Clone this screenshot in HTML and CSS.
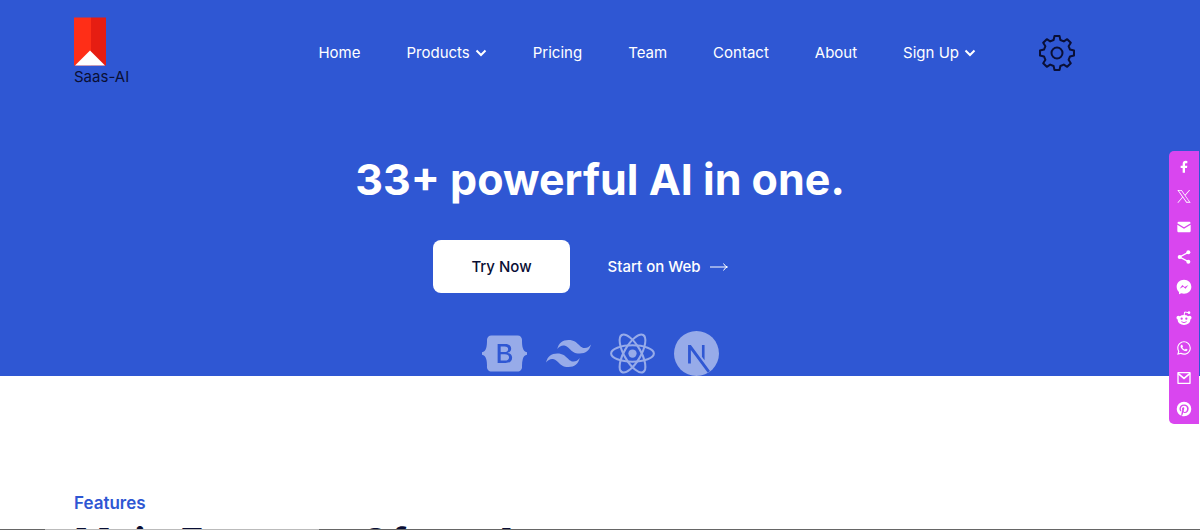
FILE: index.html
```
<!DOCTYPE html>
<html lang="en">
<head>
    <meta charset="UTF-8">
    <meta name="viewport" content="width=device-width, initial-scale=1.0">
    <title>Saas-AI</title>
    <link rel="stylesheet" href="styles.css">
</head>
<body>
    <div class="hero">
        <header class="header">
            <a class="logo" href="#">
                <svg width="32" height="48" viewBox="0 0 32 48">
                    <path fill="#ff2e17" d="M0 0h17v48H0z"/>
                    <path fill="#e61d12" d="M17 0h15v48H17z"/>
                    <path fill="#fff" d="M16 33l15 15H1z"/>
                </svg>
                <span>Saas-AI</span>
            </a>
            <nav class="nav">
                <a href="#">Home</a>
                <a href="#">Products
                    <svg class="chevron" viewBox="0 0 12 8"><path d="M1.500 1.500L6 6l4.500-4.500"/></svg>
                </a>
                <a href="#">Pricing</a>
                <a href="#">Team</a>
                <a href="#">Contact</a>
                <a href="#">About</a>
                <a href="#">Sign Up
                    <svg class="chevron" viewBox="0 0 12 8"><path d="M1.500 1.500L6 6l4.500-4.500"/></svg>
                </a>
            </nav>
            <button class="settings" aria-label="Settings">
                <svg viewBox="-18 -18 36 36">
                    <path d="M-2.500-17H2.500L3.400-13L6.800-11.600L10.200-13.800L13.800-10.200L11.600-6.800L13-3.400L17-2.500V2.500L13 3.400L11.600 6.800L13.800 10.200L10.200 13.800L6.800 11.600L3.400 13L2.500 17H-2.500L-3.400 13L-6.800 11.600L-10.200 13.800L-13.800 10.200L-11.600 6.800L-13 3.400L-17 2.500V-2.500L-13-3.400L-11.600-6.800L-13.800-10.200L-10.200-13.800L-6.800-11.600L-3.400-13Z"/>
                    <circle r="5.500"/>
                </svg>
            </button>
        </header>

        <section class="intro">
            <h1>33+ powerful AI in one.</h1>
            <div class="actions">
                <button class="try">Try Now</button>
                <a class="start" href="#">Start on Web
                    <svg width="20" height="8" viewBox="0 0 20 8"><path d="M1 4h17M14.500.500Q16 3.500 18.500 4Q16 4.500 14.500 7.500"/></svg>
                </a>
            </div>
            <div class="stack">
                <svg viewBox="0 0 24 24"><path d="M11.77 11.24H9.956V8.202h2.152c1.17 0 1.834.522 1.834 1.466 0 1.008-.773 1.572-2.174 1.572zm.324 1.206H9.957v3.348h2.231c1.459 0 2.232-.585 2.232-1.685s-.795-1.663-2.326-1.663zM24 11.39v1.218c-1.128.108-1.817.944-2.226 2.268-.407 1.319-.463 2.937-.42 4.186.045 1.3-.968 2.5-2.337 2.5H4.985c-1.37 0-2.383-1.2-2.337-2.5.043-1.249-.013-2.867-.42-4.186-.41-1.324-1.1-2.16-2.228-2.268V11.39c1.128-.108 1.819-.944 2.227-2.268.408-1.319.464-2.937.42-4.186-.045-1.3.968-2.5 2.338-2.5h14.032c1.37 0 2.382 1.2 2.337 2.5-.043 1.249.013 2.867.42 4.186.409 1.324 1.098 2.16 2.226 2.268zm-7.927 2.817c0-1.354-.953-2.333-2.368-2.488v-.057c1.04-.169 1.856-1.135 1.856-2.213 0-1.537-1.213-2.538-3.062-2.538h-4.16v10.172h4.181c2.218 0 3.553-1.086 3.553-2.876z"/></svg>
                <svg viewBox="0 0 24 24"><path d="M12 4.800c-3.200 0-5.200 1.600-6 4.800 1.200-1.600 2.600-2.200 4.200-1.800.913.228 1.565.890 2.288 1.624C13.666 10.618 15.027 12 18 12c3.200 0 5.200-1.600 6-4.800-1.200 1.600-2.600 2.200-4.200 1.800-.913-.228-1.565-.890-2.288-1.624C16.337 6.182 14.976 4.800 12 4.800zM6 12c-3.200 0-5.200 1.600-6 4.800 1.200-1.600 2.600-2.200 4.200-1.800.913.228 1.565.890 2.288 1.624C7.666 17.818 9.027 19.200 12 19.200c3.200 0 5.200-1.600 6-4.800-1.200 1.600-2.600 2.200-4.200 1.800-.913-.228-1.565-.890-2.288-1.624C10.337 13.382 8.976 12 6 12z"/></svg>
                <svg viewBox="0 0 24 24">
                    <circle cx="12" cy="12" r="2.200"/>
                    <g fill="none" stroke="#97abe9" stroke-width="1.100">
                        <ellipse cx="12" cy="12" rx="11.400" ry="4.400"/>
                        <ellipse cx="12" cy="12" rx="11.400" ry="4.400" transform="rotate(60 12 12)"/>
                        <ellipse cx="12" cy="12" rx="11.400" ry="4.400" transform="rotate(120 12 12)"/>
                    </g>
                </svg>
                <svg viewBox="0 0 24 24">
                    <circle cx="12" cy="12" r="12"/>
                    <path fill="#2f57d3" d="M7.500 7.500h1.500l10.200 13.800-1.200 1L9 10.100v7.200H7.500zM14.900 7.500h1.400v8.100l-1.400-1.900z"/>
                </svg>
            </div>
        </section>
    </div>

    <section class="features">
        <h3>Features</h3>
        <h2>Main Features Of our App</h2>
    </section>

    <aside class="share">
        <a href="#" aria-label="Facebook"><svg viewBox="0 0 24 24"><path d="M17 4.500V8h-2c-1 0-1.500.400-1.500 1.500V11.500H17l-.5 3.500h-3v7h-3.500v-7H7v-3.500h3V9c0-3 1.700-4.700 4.500-4.700z"/></svg></a>
        <a href="#" aria-label="X"><svg viewBox="0 0 24 24"><path d="M2 3h6.500l5 7L19.700 3h1.500l-7 8.100L22 22h-6.500l-5.400-7.600L3.500 22H2l7.400-8.600zm2.200 1.200L16.100 20.800h3.600L7.900 4.200z"/></svg></a>
        <a href="#" aria-label="Email"><svg viewBox="0 0 24 24"><path d="M2 6.500C2 5 3 4 4.500 4h15C21 4 22 5 22 6.500l-10 6zM2 8.500l10 6 10-6v9c0 1.500-1 2.500-2.500 2.500h-15C3 20 2 19 2 17.500z"/></svg></a>
        <a href="#" aria-label="Share"><svg viewBox="0 0 24 24"><path fill="none" stroke="#fff" stroke-width="2" d="M18.500 5L5.500 12l13 7"/><circle cx="18.500" cy="5" r="3"/><circle cx="5.500" cy="12" r="3"/><circle cx="18.500" cy="19" r="3"/></svg></a>
        <a href="#" aria-label="Messenger"><svg viewBox="0 0 24 24"><path fill-rule="evenodd" d="M12 1C5.600 1 1 5.600 1 11.600c0 3.200 1.300 5.900 3.500 7.800V23l3.500-1.600c1.200.500 2.600.700 4 .700 6.400 0 11-4.600 11-10.500S18.400 1 12 1zM5.500 14.800L9.500 9l3.500 3 5.500-3-4.200 5.800-3.500-3z"/></svg></a>
        <a href="#" aria-label="Reddit"><svg viewBox="0 0 24 24"><path fill="none" stroke="#fff" stroke-width="1.500" d="M12 9l1-6 6 1"/><circle cx="19.500" cy="4" r="2"/><circle cx="3.500" cy="11.500" r="2.800"/><circle cx="20.500" cy="11.500" r="2.800"/><ellipse cx="12" cy="15" rx="9.500" ry="7.500"/><g fill="#d946ef"><circle cx="8.500" cy="13" r="1.700"/><circle cx="15.500" cy="13" r="1.700"/></g><path fill="none" stroke="#d946ef" stroke-width="1.400" d="M8 17.500q4 3 8 0"/></svg></a>
        <a href="#" aria-label="WhatsApp"><svg viewBox="-2 -2 28 28"><path d="M17.472 14.382c-.297-.149-1.758-.867-2.03-.967-.273-.099-.471-.148-.67.15-.197.297-.767.966-.94 1.164-.173.199-.347.223-.644.075-.297-.15-1.255-.463-2.39-1.475-.883-.788-1.48-1.761-1.653-2.059-.173-.297-.018-.458.13-.606.134-.133.298-.347.446-.52.149-.174.198-.298.298-.497.099-.198.05-.371-.025-.52-.075-.149-.669-1.612-.916-2.207-.242-.579-.487-.5-.669-.51-.173-.008-.371-.01-.57-.01-.198 0-.52.074-.792.372-.272.297-1.04 1.016-1.04 2.479 0 1.462 1.065 2.875 1.213 3.074.149.198 2.096 3.2 5.077 4.487.709.306 1.262.489 1.694.625.712.227 1.36.195 1.871.118.571-.085 1.758-.719 2.006-1.413.248-.694.248-1.289.173-1.413-.074-.124-.272-.198-.57-.347m-5.421 7.403h-.004a9.87 9.87 0 01-5.031-1.378l-.361-.214-3.741.982.998-3.648-.235-.374a9.86 9.86 0 01-1.51-5.26c.001-5.45 4.436-9.884 9.888-9.884 2.64 0 5.122 1.03 6.988 2.898a9.825 9.825 0 012.893 6.994c-.003 5.45-4.437 9.884-9.885 9.884m8.413-18.297A11.815 11.815 0 0012.05 0C5.495 0 .16 5.335.157 11.892c0 2.096.547 4.142 1.588 5.945L.057 24l6.305-1.654a11.882 11.882 0 005.683 1.448h.005c6.554 0 11.89-5.335 11.893-11.893a11.821 11.821 0 00-3.48-8.413z"/></svg></a>
        <a href="#" aria-label="Gmail"><svg viewBox="0 0 24 24"><path fill="none" stroke="#fff" stroke-width="2" stroke-linejoin="round" d="M3 4h18v16H3z"/><path fill="none" stroke="#fff" stroke-width="2.500" d="M3 5l9 7.500L21 5"/></svg></a>
        <a href="#" aria-label="Pinterest"><svg viewBox="1 1 22 22"><path d="M9.040 21.540c.96.29 1.930.46 2.960.46a10 10 0 0 0 10-10A10 10 0 0 0 12 2 10 10 0 0 0 2 12c0 4.250 2.670 7.900 6.440 9.340-.09-.78-.18-2.070 0-2.960l1.150-4.940s-.29-.58-.29-1.500c0-1.380.86-2.410 1.840-2.410.86 0 1.260.63 1.260 1.440 0 .86-.57 2.090-.86 3.270-.17.98.52 1.840 1.520 1.840 1.780 0 3.160-1.900 3.160-4.580 0-2.400-1.720-4.040-4.190-4.040-2.820 0-4.480 2.100-4.480 4.310 0 .86.28 1.730.74 2.300.09.06.09.14.06.29l-.29 1.090c0 .17-.11.23-.28.11-1.280-.56-2.020-2.380-2.020-3.850 0-3.160 2.240-6.030 6.560-6.030 3.440 0 6.120 2.470 6.120 5.750 0 3.440-2.130 6.200-5.180 6.200-.97 0-1.920-.52-2.260-1.130l-.67 2.370c-.23.86-.86 2.010-1.290 2.700z"/></svg></a>
    </aside>
    <div class="status-line"></div>
</body>
</html>
```
FILE: styles.css
```
* {
    box-sizing: border-box;
}
body {
    margin: 0;
    height: 100vh;
    overflow: hidden;
    font-family: Inter, sans-serif;
    font-size: 15px;
    line-height: 24px;
    color: #090e34;
    background: #fff;
}
a {
    color: inherit;
    text-decoration: none;
}
svg {
    display: block;
    fill: currentColor;
}
h1, h2, h3 {
    margin: 0;
}
.hero {
    background: #2f57d3;
    color: #fff;
}
.header {
    display: flex;
    align-items: center;
    padding: 17px 125px 17px 74px;
}
.logo {
    color: #0a0f35;
    line-height: 22px;
}
.logo svg {
    height: 49px;
}
.logo span {
    display: block;
}
.nav {
    display: flex;
    justify-content: flex-end;
    gap: 46px;
    flex: 1;
    margin-right: 63px;
}
.nav a {
    display: flex;
    align-items: center;
    gap: 5px;
}
.chevron {
    width: 12px;
    height: 8px;
    fill: none;
    stroke: #fff;
    stroke-width: 2;
}
.settings {
    padding: 0;
    border: none;
    background: none;
    cursor: pointer;
}
.settings svg {
    width: 36px;
    height: 36px;
    fill: none;
    stroke: #0a0f35;
    stroke-width: 2;
    stroke-linejoin: round;
}
.intro {
    display: flex;
    flex-direction: column;
    align-items: center;
    padding-top: 47px;
}
.intro h1 {
    font-size: 43px;
    line-height: 54px;
    font-weight: 700;
}
.actions {
    display: flex;
    align-items: center;
    gap: 38px;
    margin: 34px 0 38px;
    padding-right: 38px;
}
.try {
    padding: 14px 38px;
    border: none;
    border-radius: 8px;
    background: #fff;
    color: #090e34;
    font: 500 15px/25px Inter, sans-serif;
    cursor: pointer;
}
.start {
    display: flex;
    align-items: center;
    gap: 8px;
    font-weight: 500;
}
.start svg {
    fill: none;
    stroke: #fff;
}
.stack {
    display: flex;
    gap: 19px;
    color: #97abe9;
}
.stack svg {
    width: 45px;
    height: 45px;
}
.features {
    padding: 115px 74px 0;
}
.features h3 {
    font-size: 17px;
    line-height: 24px;
    font-weight: 600;
    color: #2f57d3;
}
.features h2 {
    margin-top: 4px;
    font-size: 40px;
    line-height: 48px;
    font-weight: 700;
}
.share {
    position: fixed;
    top: 151px;
    right: 1px;
    display: grid;
    grid-auto-rows: 1fr;
    width: 30px;
    height: 273px;
    border-radius: 5px 0 0 5px;
    background: #d946ef;
    color: #fff;
}
.share a {
    display: flex;
    align-items: center;
    justify-content: center;
}
.share svg {
    width: 16px;
    height: 16px;
}
.status-line {
    position: fixed;
    left: 0;
    right: 0;
    bottom: 0;
    height: 1px;
    background: linear-gradient(to right, #666 45px, #bbb 45px 319px, #666 319px);
}
```
